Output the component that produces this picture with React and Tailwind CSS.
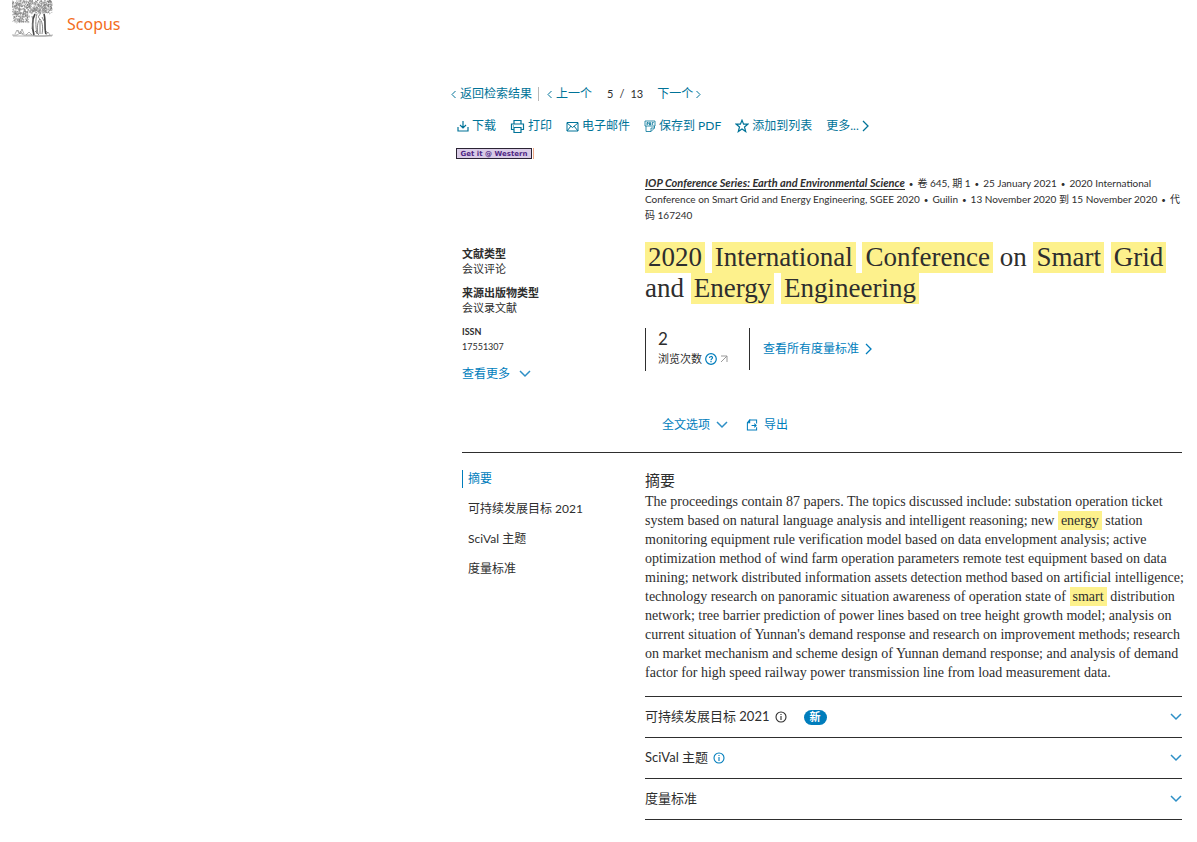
import React from 'react'

const linkClass = "text-[#007398] no-underline"
const blueLink = "text-[#007dbc] no-underline"

const Icon = ({ children, className, size = 12, box = 12 }) => (
    <svg width={size} height={size} viewBox={`0 0 ${box} ${box}`} fill="none" stroke="currentColor" className={className} aria-hidden="true">
        {children}
    </svg>
)

const Left = () => <svg width="5" height="9" viewBox="0 0 5 9" fill="none" stroke="currentColor"><path d="M4.500 1 1 4.500 4.500 8" /></svg>
const Right = () => <svg width="5" height="9" viewBox="0 0 5 9" fill="none" stroke="currentColor"><path d="M.5 1 4 4.500.5 8" /></svg>
const BigRight = () => <svg width="8" height="12" viewBox="0 0 8 12" fill="none" stroke="currentColor" strokeWidth="1.300"><path d="m1 1 5 5-5 5" /></svg>
const Down = () => <svg width="12" height="8" viewBox="0 0 12 8" fill="none" stroke="#2d8fc6" strokeWidth="1.500"><path d="m1 1 5 5 5-5" /></svg>

const Mark = ({ children }) => (
    <mark className="inline-block bg-[#fdf18c] px-[3px] text-inherit align-top">{children}</mark>
)

// short pseudo-random strokes that make up the engraved foliage
const leaves = []
let seed = 7
const rnd = () => {
    seed = (seed * 16807) % 2147483647
    return seed / 2147483647
}
for (let i = 0; i < 900; i++) {
    const x = rnd() * 40
    const y = rnd() * 22
    if (y < 13 || x < 17 && x > 1) {
        leaves.push(`M${x.toFixed(1)} ${y.toFixed(1)}q${(rnd() * 2).toFixed(1)} ${(rnd() * 2 - 1).toFixed(1)} ${(rnd() * 2 - 1).toFixed(1)} ${(rnd() * 2).toFixed(1)}`)
    }
}

const Tree = () => (
    <svg width="42" height="37" viewBox="0 0 42 37" fill="none" stroke="#777" strokeWidth=".5" aria-hidden="true">
        <path d={leaves.join('')} />
        <path stroke="#444" strokeWidth="1.600" d="M23 14c-3 5-3 14-1 21M32 14c2 7 0 14 2 20" />
        <path stroke="#888" strokeWidth="1" d="M25 14c-2 6-1 15 0 20" />
        <path strokeWidth=".9" d="M28 15c-2 0-2 3 0 4-3 3-3 10-2 15M28 19c3 4 3 10 2 15M28 21v13M30 17l2 4M20 16l1 5-1 8M23 31l4 4" />
        <path stroke="#666" d="M0 35h5l3-2 4 2h8l4 1h9l8-1M1 36h39M3 34l2-4 2 3M6 30l2 4 2-5 2 5M8 31l3 3M14 35l3-3 3 3M34 35l2-3 2 3M33 30l3 3" />
    </svg>
)

const Download = () => <Icon><path d="M6 1v7M3 5l3 3 3-3M1 7v4h10V7" strokeWidth="1.200" /></Icon>
const Print = () => (
    <Icon size={15} box={15}><path d="M4 5V1.500h7V5M4 10.500H1.500V5h12v5.500H11M4 8.500h7v5H4zM3 7h1" strokeWidth="1.200" /></Icon>
)
const Mail = () => <Icon size={13} box={13}><path d="M1 2.500h11v8.500H1zM1 3l5.500 4.500L12 3M1 11l4-5M12 11 8 6" /></Icon>
const Pdf = () => (
    <Icon size={12} box={12}><path d="M2 6v5.500h5L10.500 8V6M7 11.500V8h3.500M1 1h10v5H1zM3 5V2.500h1.200V4H3M5.500 5V2.500h1V5zM8.200 5V2.500h1.500M8.200 4h1" strokeWidth=".8" /></Icon>
)
const Star = () => <Icon size={14} box={14}><path d="m7 1.200 1.600 4h4.200L9.500 8l1.200 4.500L7 10l-3.700 2.500L4.500 8 1.200 5.200h4.200z" strokeWidth="1.200" /></Icon>
const Export = () => <Icon size={12} box={13}><path d="M4 1h7.500v4M11.500 9v3h-10V4L4 1v3H1.500M6 7h5M9 5l2 2-2 2" strokeWidth="1.100" /></Icon>
const Info = () => <Icon><circle cx="6" cy="6" r="5" strokeWidth="1.100" /><path d="M6 5v4M6 3v1" strokeWidth="1.100" /></Icon>
const Help = () => <Icon className="text-[#007dbc]"><circle cx="6" cy="6" r="5.300" strokeWidth="1.200" /><path d="M4.500 5c0-2 3-2 3-.2C7.500 6 6 5.800 6 7.300M6 8v1.200" strokeWidth="1.200" /></Icon>

const details = [
    { label: '文献类型', value: '会议评论' },
    { label: '来源出版物类型', value: '会议录文献' },
]

const Dot = () => <span className="px-1 text-[8px] leading-none">•</span>

const App = () => {
    return (
        <div className="bg-white text-[#2e2e2e] font-[Lato,'Noto_Sans_CJK_SC',sans-serif] text-xs">
            <header className="flex h-[84px] items-start pl-3">
                <Tree />
                <a href="#home" className="pl-[13px] pt-3 text-[16px] leading-6 text-[#f36d21] font-['Noto_Sans',sans-serif]">Scopus</a>
            </header>

            <main className="ml-[451px] pr-[15px]">
                <nav className="flex h-5 items-center whitespace-nowrap">
                    <a href="#results" className={linkClass + " flex items-center gap-1"}><Left />返回检索结果</a>
                    <span className="ml-[6px] h-[14px] w-px bg-[#b9b9b9]"></span>
                    <a href="#prev" className={linkClass + " ml-2 flex items-center gap-1"}><Left />上一个</a>
                    <span className="ml-[15px] flex gap-[6px] text-[11px]"><span>5</span><span>/</span><span>13</span></span>
                    <a href="#next" className={linkClass + " ml-[14px] flex items-center gap-[3px]"}>下一个<Right /></a>
                </nav>

                <div className="mt-3 flex h-5 items-center whitespace-nowrap pl-[6px] text-[#007398]">
                    <button className="flex items-center gap-[3px]"><Download />下载</button>
                    <button className="ml-[14px] flex items-center gap-[3px]"><Print />打印</button>
                    <button className="ml-[14px] flex items-center gap-[3px]"><Mail />电子邮件</button>
                    <button className="ml-[14px] flex items-center gap-[3px]"><Pdf />保存到 PDF</button>
                    <button className="ml-[14px] flex items-center gap-[3px]"><Star />添加到列表</button>
                    <button className="ml-[14px] flex items-center gap-[3px]">更多...<BigRight /></button>
                </div>

                <div className="mt-3 flex h-[11px] items-center gap-px pl-[5px]">
                    <a href="#western" className="flex h-[11px] w-[76px] items-center justify-center border border-[#2a2333] bg-[#d9cbe6] text-[7px] leading-[8px] font-bold text-[#4f2683] font-['DejaVu_Sans',sans-serif] whitespace-nowrap">Get it @ Western</a>
                    <span className="h-[11px] w-px bg-[#f0a988]"></span>
                </div>

                <div className="grid grid-cols-[183px_minmax(0,1fr)] pt-4 pl-[11px]">
                    <aside className="pt-[71px] text-[11px] leading-[15px]">
                        <dl>
                            {details.map((d) => (
                                <div key={d.label} className="mb-[9px]">
                                    <dt className="font-bold">{d.label}</dt>
                                    <dd>{d.value}</dd>
                                </div>
                            ))}
                            <div className="mb-[9px] text-[9px]">
                                <dt className="font-bold">ISSN</dt>
                                <dd>17551307</dd>
                            </div>
                        </dl>
                        <button className={blueLink + " mt-3 flex items-center gap-[9px] text-xs"}>查看更多 <Down /></button>
                    </aside>

                    <section>
                        <p className="text-[10px] leading-4 whitespace-nowrap">
                            <a href="#source" className="border-b border-[#2e2e2e] text-[11px] leading-none font-bold italic">IOP Conference Series: Earth and Environmental Science</a>
                            <Dot />卷 645, 期 1<Dot />25 January 2021<Dot />2020 International<br />
                            Conference on Smart Grid and Energy Engineering, SGEE 2020<Dot />Guilin<Dot />13 November 2020 到 15 November 2020<Dot />代<br />
                            码 167240
                        </p>

                        <h1 className="mt-[19px] text-[27px] leading-[31px] whitespace-nowrap font-['Liberation_Serif',serif]">
                            <Mark>2020</Mark> <Mark>International</Mark> <Mark>Conference</Mark> on <Mark>Smart</Mark> <Mark>Grid</Mark><br />
                            and <Mark>Energy</Mark> <Mark>Engineering</Mark>
                        </h1>

                        <div className="mt-6 flex h-[43px]">
                            <div className="w-[104px] border-l border-[#2e2e2e] pl-3">
                                <p className="text-[17px] leading-[22px]">2</p>
                                <p className="flex h-[18px] items-center gap-[3px] text-[11px]">浏览次数<Help />
                                    <svg width="8" height="8" viewBox="0 0 8 8" fill="none" stroke="#999"><path d="M1 1h6v6M7 1 1 7" /></svg>
                                </p>
                            </div>
                            <div className="flex h-[42px] items-center border-l border-[#2e2e2e] pl-[13px]">
                                <a href="#metrics" className={blueLink + " flex items-center gap-[6px]"}>查看所有度量标准<BigRight /></a>
                            </div>
                        </div>

                        <div className="mt-11 flex h-5 items-center pl-[17px]">
                            <button className={blueLink + " flex items-center gap-[6px]"}>全文选项<Down /></button>
                            <button className={blueLink + " ml-[18px] flex items-center gap-[6px]"}><Export />导出</button>
                        </div>
                    </section>
                </div>

                <div className="ml-[11px] mt-[17px] grid grid-cols-[183px_minmax(0,1fr)] border-t border-[#2e2e2e]">
                    <nav className="pt-[17px]">
                        <ul className="flex flex-col gap-3 leading-[18px]">
                            <li><a href="#abstract" className={blueLink + " block border-l border-[#007dbc] pl-[5px]"}>摘要</a></li>
                            <li><a href="#sdg" className="block pl-[6px]">可持续发展目标 2021</a></li>
                            <li><a href="#scival" className="block pl-[6px]">SciVal 主题</a></li>
                            <li><a href="#metrics" className="block pl-[6px]">度量标准</a></li>
                        </ul>
                    </nav>

                    <section className="pt-[15px]">
                        <h2 className="text-[15px] leading-[24px]">摘要</h2>
                        <p className="text-[14px] leading-[19px] whitespace-nowrap font-['Liberation_Serif',serif]">
                            The proceedings contain 87 papers. The topics discussed include: substation operation ticket<br />
                            system based on natural language analysis and intelligent reasoning; new <Mark>energy</Mark> station<br />
                            monitoring equipment rule verification model based on data envelopment analysis; active<br />
                            optimization method of wind farm operation parameters remote test equipment based on data<br />
                            mining; network distributed information assets detection method based on artificial intelligence;<br />
                            technology research on panoramic situation awareness of operation state of <Mark>smart</Mark> distribution<br />
                            network; tree barrier prediction of power lines based on tree height growth model; analysis on<br />
                            current situation of Yunnan's demand response and research on improvement methods; research<br />
                            on market mechanism and scheme design of Yunnan demand response; and analysis of demand<br />
                            factor for high speed railway power transmission line from load measurement data.
                        </p>

                        <div className="mt-[14px] border-b border-[#2e2e2e] text-[13px]">
                            <button className="flex h-[41px] w-full items-center border-t border-[#2e2e2e]">
                                可持续发展目标 2021
                                <span className="ml-[5px]"><Info /></span>
                                <span className="ml-[17px] flex h-[15px] items-center rounded-full bg-[#007dbc] px-[6px] text-[11px] font-bold text-white">新</span>
                                <span className="ml-auto"><Down /></span>
                            </button>
                            <button className="flex h-[41px] w-full items-center border-t border-[#2e2e2e]">
                                SciVal 主题
                                <span className="ml-[5px] text-[#007dbc]"><Info /></span>
                                <span className="ml-auto"><Down /></span>
                            </button>
                            <button className="flex h-[41px] w-full items-center border-t border-[#2e2e2e]">
                                度量标准
                                <span className="ml-auto"><Down /></span>
                            </button>
                        </div>
                    </section>
                </div>
            </main>
        </div>
    )
}

export default App
